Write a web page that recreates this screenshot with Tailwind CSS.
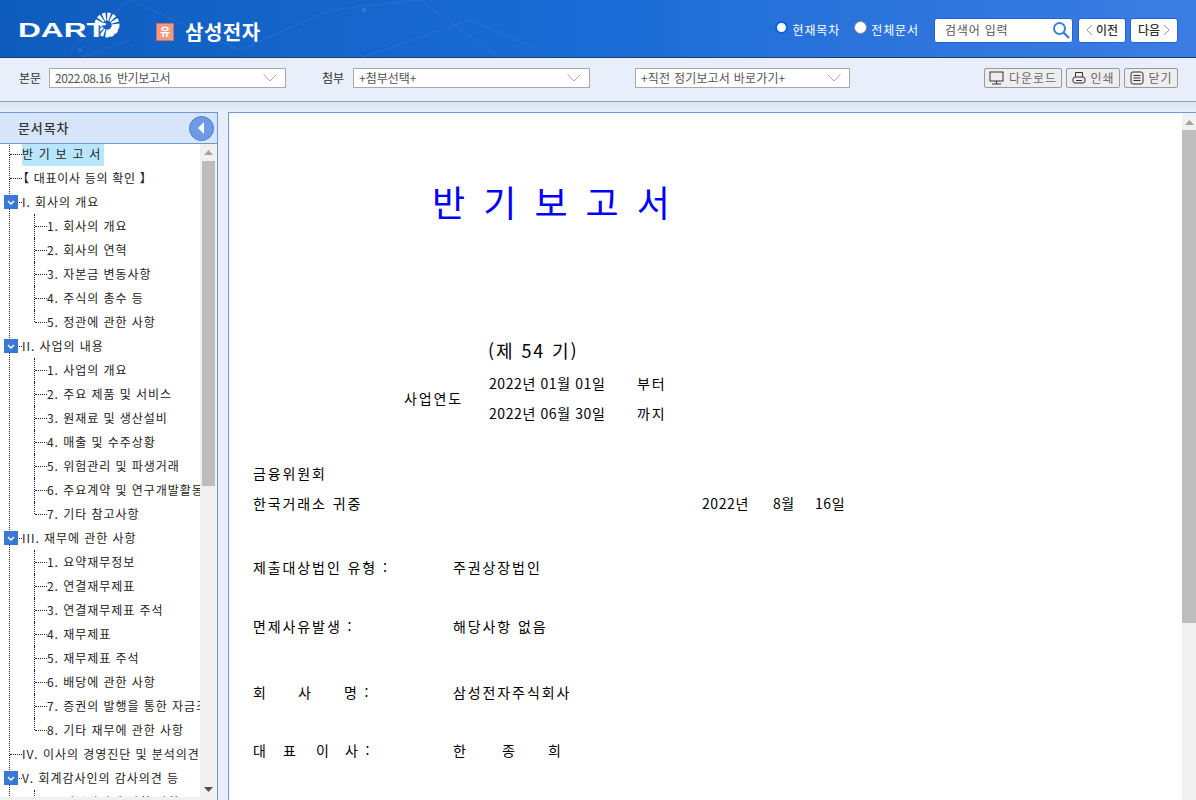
<!DOCTYPE html>
<html lang="ko">
<head>
    <meta charset="UTF-8">
    <script src="https://cdn.jsdelivr.net/npm/@tailwindcss/browser@4"></script>
    <title>DART - 삼성전자</title>
</head>
<body class="h-[800px] overflow-hidden bg-[#e8effb] font-['Noto_Sans_CJK_KR','Liberation_Sans',sans-serif] text-[12px] text-[#333]">
    <!-- top bar -->
    <header class="relative h-[58px] flex items-center overflow-hidden border-b border-[#1a3f78] bg-gradient-to-r from-[#0e5cbd] via-[#1a6cd6] to-[#3b7de3]">
        <svg class="absolute inset-0 opacity-20" width="1196" height="58" fill="none" stroke="#9cc8ff" stroke-width="0.6">
            <path d="M70 50 130 0M130 0 240 50M240 50 330 10M330 10 420 0M420 0 500 58M130 40 80 58M360 58 470 20M470 20 540 50"/>
            <circle cx="80" cy="50" r="1.5" fill="#9cc8ff"/><circle cx="364" cy="10" r="2" fill="#9cc8ff"/>
        </svg>
        <div class="relative w-[156px] shrink-0 flex items-center pl-[18px] mt-[2px]">
            <svg class="absolute left-[94px] -top-[8px]" width="26" height="26" viewBox="0 0 26 26" fill="none" stroke="#fff">
                <circle cx="13" cy="13" r="8.5" stroke-width="8" stroke-dasharray="2.6 1.4"/>
                <path d="M14 25a12 12 0 0 0 11-11h-7a5 5 0 0 1-4 4z" fill="#fff" stroke="none"/>
            </svg>
            <span class="relative origin-left scale-x-[1.58] font-['Liberation_Sans'] text-[20px] leading-none font-bold text-white [text-shadow:1px_0_0_#1565c8]">DART</span>
        </div>
        <span class="relative mt-[6px] w-[18px] h-[18px] flex items-center justify-center bg-[#ee9a84] border border-[#c4735c] text-[11px] font-bold text-white">유</span>
        <h1 class="relative mt-[6px] ml-[11px] text-[20px] tracking-[0.5px] font-bold text-white">삼성전자</h1>
        <div class="relative ml-auto mt-[3px] flex items-center pr-[18px]">
            <span class="w-[13px] h-[13px] rounded-full bg-white border-2 border-[#0f62e8] mt-[-6px]"></span>
            <span class="ml-[4px] text-white tracking-[0.9px]">현재목차</span>
            <span class="ml-[14px] w-[13px] h-[13px] rounded-full bg-white border border-[#8a8a8a] mt-[-6px]"></span>
            <span class="ml-[4px] text-white tracking-[0.9px]">전체문서</span>
            <div class="ml-[15px] w-[139px] h-[25px] flex items-center justify-between rounded-[3px] bg-white border border-[#2560d8] pl-[10px] pr-[2px]">
                <span class="text-[#555] tracking-[0.8px]">검색어 입력</span>
                <svg width="18" height="18" viewBox="0 0 18 18" fill="none" stroke="#3a84dc" stroke-width="2"><circle cx="7.5" cy="7.5" r="5.5"/><path d="M11.5 11.500 17 17" stroke-width="2.4"/></svg>
            </div>
            <button class="ml-[5px] w-[48px] h-[25px] flex items-center justify-center gap-[3px] rounded-[3px] bg-white border border-[#2560d8] font-medium">
                <svg width="7" height="12" viewBox="0 0 7 12" fill="none" stroke="#999"><path d="M6 1 1 6l5 5"/></svg>이전
            </button>
            <button class="ml-[4px] w-[48px] h-[25px] flex items-center justify-center gap-[3px] rounded-[3px] bg-white border border-[#2560d8] font-medium">
                다음<svg width="7" height="12" viewBox="0 0 7 12" fill="none" stroke="#999"><path d="m1 1 5 5-5 5"/></svg>
            </button>
        </div>
    </header>

    <!-- select bar -->
    <div class="h-[44px] flex items-center border-b border-[#7c9dd0] bg-[#e8effb] pl-[19px] pb-[3px]">
        <span class="w-[30px]">본문</span>
        <div class="w-[237px] h-[20px] flex items-center justify-between bg-white border border-[#aaa] pl-[5px] pr-[8px] text-[#555]">
            <span class="whitespace-pre tracking-[-0.4px]">2022.08.16  반기보고서</span>
            <svg width="14" height="8" viewBox="0 0 14 8" fill="none" stroke="#aaa"><path d="m0.5 0.5 6.5 6.5 6.5-6.5"/></svg>
        </div>
        <span class="ml-[36px] w-[31px]">첨부</span>
        <div class="w-[237px] h-[20px] flex items-center justify-between bg-white border border-[#aaa] pl-[5px] pr-[8px] text-[#555]">
            <span>+첨부선택+</span>
            <svg width="14" height="8" viewBox="0 0 14 8" fill="none" stroke="#aaa"><path d="m0.5 0.5 6.5 6.5 6.5-6.5"/></svg>
        </div>
        <div class="ml-[45px] w-[215px] h-[20px] flex items-center justify-between bg-white border border-[#aaa] pl-[5px] pr-[8px] text-[#555]">
            <span class="tracking-[0.2px]">+직전 정기보고서 바로가기+</span>
            <svg width="14" height="8" viewBox="0 0 14 8" fill="none" stroke="#aaa"><path d="m0.5 0.5 6.5 6.5 6.5-6.5"/></svg>
        </div>
        <div class="ml-auto flex gap-[4px] pr-[18px] text-[#666] tracking-[0.9px]">
            <button class="w-[78px] h-[20px] flex items-center justify-center gap-[5px] rounded-[2px] bg-[#eee] border border-[#999]">
                <svg width="15" height="14" viewBox="0 0 15 14" fill="none" stroke="#333"><rect x="1" y="1" width="13" height="9"/><path d="M7.5 10v3M3 13h9"/></svg>다운로드
            </button>
            <button class="w-[54px] h-[20px] flex items-center justify-center gap-[5px] rounded-[2px] bg-[#eee] border border-[#999]">
                <svg width="14" height="14" viewBox="0 0 14 14" fill="none" stroke="#333"><path d="M3.5 6V1.5h7V6"/><rect x="1" y="6" width="12" height="6" rx="2"/><path d="M4 9.500h6"/></svg>인쇄
            </button>
            <button class="w-[54px] h-[20px] flex items-center justify-center gap-[5px] rounded-[2px] bg-[#eee] border border-[#999]">
                <svg width="14" height="14" viewBox="0 0 14 14" fill="none" stroke="#333"><rect x="1" y="1" width="12" height="12" rx="2"/><path d="M3.5 4.500h7M3.500 7h7M3.500 9.500h7"/></svg>닫기
            </button>
        </div>
    </div>

    <div class="flex pt-[10px] bg-gradient-to-b from-[#dfe5ef] to-[#e8effb] to-[10px] h-[698px]">
        <!-- toc panel -->
        <aside class="w-[218px] shrink-0 flex flex-col border-t border-r border-[#6f98d8] bg-white">
            <div class="h-[31px] shrink-0 flex items-center justify-between border-b border-[#6f98d8] bg-[#d6e5fb] pl-[18px] pr-[3px]">
                <span class="text-[13px] font-medium tracking-[0.9px]">문서목차</span>
                <span class="w-[25px] h-[25px] flex items-center justify-center rounded-full bg-[#6e9be3] border border-[#4f7cc6]">
                    <svg width="7" height="12" viewBox="0 0 7 12"><path d="M6 0v12L0 6z" fill="#fff"/></svg>
                </span>
            </div>
            <div class="relative flex grow overflow-hidden">
                <div class="w-[200px] shrink-0 overflow-hidden text-[12px] tracking-[0.95px] whitespace-nowrap text-[#222]">
                    <div class="ml-[9px] border-l border-dotted border-[#222]">
                        <div class="flex h-[24px] items-center -mt-[2px]"><i class="w-[12px] shrink-0 border-t border-dotted border-[#222]"></i><span class="h-[23px] pr-[3px] flex items-center rounded-[2px] bg-[#b8e6ff] tracking-[1.2px]">반 기 보 고 서</span></div>
                        <div class="flex h-[24px] items-center"><i class="w-[12px] shrink-0 border-t border-dotted border-[#222]"></i><span class="-ml-[5px] tracking-[0.7px]">【 대표이사 등의 확인 】</span></div>

                        <div class="relative flex h-[24px] items-center"><b class="absolute -left-[6px] top-[5px] w-[14px] h-[14px] flex items-center justify-center bg-[#3a78d8]"><svg width="8" height="5" viewBox="0 0 8 5" fill="none" stroke="#fff" stroke-width="1.5"><path d="m1 1 3 3 3-3"/></svg></b><i class="w-[12px] shrink-0 border-t border-dotted border-[#222]"></i>I. 회사의 개요</div>
                        <div class="flex h-[24px] items-center pl-[24px]"><i class="h-full shrink-0 border-l border-dotted border-[#222]"></i><i class="w-[12px] shrink-0 border-t border-dotted border-[#222]"></i>1. 회사의 개요</div>
                        <div class="flex h-[24px] items-center pl-[24px]"><i class="h-full shrink-0 border-l border-dotted border-[#222]"></i><i class="w-[12px] shrink-0 border-t border-dotted border-[#222]"></i>2. 회사의 연혁</div>
                        <div class="flex h-[24px] items-center pl-[24px]"><i class="h-full shrink-0 border-l border-dotted border-[#222]"></i><i class="w-[12px] shrink-0 border-t border-dotted border-[#222]"></i>3. 자본금 변동사항</div>
                        <div class="flex h-[24px] items-center pl-[24px]"><i class="h-full shrink-0 border-l border-dotted border-[#222]"></i><i class="w-[12px] shrink-0 border-t border-dotted border-[#222]"></i>4. 주식의 총수 등</div>
                        <div class="flex h-[24px] items-center pl-[24px]"><i class="h-3 self-start shrink-0 border-l border-dotted border-[#222]"></i><i class="w-[12px] shrink-0 border-t border-dotted border-[#222]"></i>5. 정관에 관한 사항</div>

                        <div class="relative flex h-[24px] items-center"><b class="absolute -left-[6px] top-[5px] w-[14px] h-[14px] flex items-center justify-center bg-[#3a78d8]"><svg width="8" height="5" viewBox="0 0 8 5" fill="none" stroke="#fff" stroke-width="1.5"><path d="m1 1 3 3 3-3"/></svg></b><i class="w-[12px] shrink-0 border-t border-dotted border-[#222]"></i>II. 사업의 내용</div>
                        <div class="flex h-[24px] items-center pl-[24px]"><i class="h-full shrink-0 border-l border-dotted border-[#222]"></i><i class="w-[12px] shrink-0 border-t border-dotted border-[#222]"></i>1. 사업의 개요</div>
                        <div class="flex h-[24px] items-center pl-[24px]"><i class="h-full shrink-0 border-l border-dotted border-[#222]"></i><i class="w-[12px] shrink-0 border-t border-dotted border-[#222]"></i>2. 주요 제품 및 서비스</div>
                        <div class="flex h-[24px] items-center pl-[24px]"><i class="h-full shrink-0 border-l border-dotted border-[#222]"></i><i class="w-[12px] shrink-0 border-t border-dotted border-[#222]"></i>3. 원재료 및 생산설비</div>
                        <div class="flex h-[24px] items-center pl-[24px]"><i class="h-full shrink-0 border-l border-dotted border-[#222]"></i><i class="w-[12px] shrink-0 border-t border-dotted border-[#222]"></i>4. 매출 및 수주상황</div>
                        <div class="flex h-[24px] items-center pl-[24px]"><i class="h-full shrink-0 border-l border-dotted border-[#222]"></i><i class="w-[12px] shrink-0 border-t border-dotted border-[#222]"></i>5. 위험관리 및 파생거래</div>
                        <div class="flex h-[24px] items-center pl-[24px]"><i class="h-full shrink-0 border-l border-dotted border-[#222]"></i><i class="w-[12px] shrink-0 border-t border-dotted border-[#222]"></i>6. 주요계약 및 연구개발활동</div>
                        <div class="flex h-[24px] items-center pl-[24px]"><i class="h-3 self-start shrink-0 border-l border-dotted border-[#222]"></i><i class="w-[12px] shrink-0 border-t border-dotted border-[#222]"></i>7. 기타 참고사항</div>

                        <div class="relative flex h-[24px] items-center"><b class="absolute -left-[6px] top-[5px] w-[14px] h-[14px] flex items-center justify-center bg-[#3a78d8]"><svg width="8" height="5" viewBox="0 0 8 5" fill="none" stroke="#fff" stroke-width="1.5"><path d="m1 1 3 3 3-3"/></svg></b><i class="w-[12px] shrink-0 border-t border-dotted border-[#222]"></i>III. 재무에 관한 사항</div>
                        <div class="flex h-[24px] items-center pl-[24px]"><i class="h-full shrink-0 border-l border-dotted border-[#222]"></i><i class="w-[12px] shrink-0 border-t border-dotted border-[#222]"></i>1. 요약재무정보</div>
                        <div class="flex h-[24px] items-center pl-[24px]"><i class="h-full shrink-0 border-l border-dotted border-[#222]"></i><i class="w-[12px] shrink-0 border-t border-dotted border-[#222]"></i>2. 연결재무제표</div>
                        <div class="flex h-[24px] items-center pl-[24px]"><i class="h-full shrink-0 border-l border-dotted border-[#222]"></i><i class="w-[12px] shrink-0 border-t border-dotted border-[#222]"></i>3. 연결재무제표 주석</div>
                        <div class="flex h-[24px] items-center pl-[24px]"><i class="h-full shrink-0 border-l border-dotted border-[#222]"></i><i class="w-[12px] shrink-0 border-t border-dotted border-[#222]"></i>4. 재무제표</div>
                        <div class="flex h-[24px] items-center pl-[24px]"><i class="h-full shrink-0 border-l border-dotted border-[#222]"></i><i class="w-[12px] shrink-0 border-t border-dotted border-[#222]"></i>5. 재무제표 주석</div>
                        <div class="flex h-[24px] items-center pl-[24px]"><i class="h-full shrink-0 border-l border-dotted border-[#222]"></i><i class="w-[12px] shrink-0 border-t border-dotted border-[#222]"></i>6. 배당에 관한 사항</div>
                        <div class="flex h-[24px] items-center pl-[24px]"><i class="h-full shrink-0 border-l border-dotted border-[#222]"></i><i class="w-[12px] shrink-0 border-t border-dotted border-[#222]"></i>7. 증권의 발행을 통한 자금조달</div>
                        <div class="flex h-[24px] items-center pl-[24px]"><i class="h-3 self-start shrink-0 border-l border-dotted border-[#222]"></i><i class="w-[12px] shrink-0 border-t border-dotted border-[#222]"></i>8. 기타 재무에 관한 사항</div>

                        <div class="flex h-[24px] items-center"><i class="w-[12px] shrink-0 border-t border-dotted border-[#222]"></i>IV. 이사의 경영진단 및 분석의견</div>
                        <div class="relative flex h-[24px] items-center"><b class="absolute -left-[6px] top-[5px] w-[14px] h-[14px] flex items-center justify-center bg-[#3a78d8]"><svg width="8" height="5" viewBox="0 0 8 5" fill="none" stroke="#fff" stroke-width="1.5"><path d="m1 1 3 3 3-3"/></svg></b><i class="w-[12px] shrink-0 border-t border-dotted border-[#222]"></i>V. 회계감사인의 감사의견 등</div>
                        <div class="flex h-[24px] items-center pl-[24px]"><i class="h-full shrink-0 border-l border-dotted border-[#222]"></i><i class="w-[12px] shrink-0 border-t border-dotted border-[#222]"></i>1. 외부감사에 관한 사항</div>
                    </div>
                </div>
                <!-- toc scrollbar -->
                <div class="w-[17px] shrink-0 flex flex-col items-center bg-[#f0f0f0] px-[2px]">
                    <svg class="mt-[6px] shrink-0" width="9" height="5" viewBox="0 0 9 5"><path d="M4.5 0 9 5H0z" fill="#a3a3a3"/></svg>
                    <div class="mt-[6px] w-full h-[325px] shrink-0 bg-[#bdbdbd]"></div>
                    <svg class="mt-auto mb-[8px] shrink-0" width="9" height="5" viewBox="0 0 9 5"><path d="M0 0h9L4.500 5z" fill="#505050"/></svg>
                </div>
                <div class="absolute left-0 bottom-0 w-[200px] h-[3px] bg-[#f0f0f0]"></div>
            </div>
        </aside>

        <!-- report -->
        <main class="relative ml-[10px] grow flex border-t border-l border-[#6f98d8] bg-white overflow-hidden text-[14px] leading-none tracking-[1.9px] text-black">
            <div class="grow pl-[24px]">
                <h2 class="mt-[70px] ml-[179px] text-[36px] leading-none font-normal tracking-[4px] text-[#0000ff] whitespace-pre">반 기 보 고 서</h2>
                <p class="mt-[122px] ml-[235px] text-[18px]">(제 54 기)</p>
                <div class="mt-[17px] ml-[151px] flex items-center">
                    <span class="w-[85px]">사업연도</span>
                    <div class="grid grid-cols-[148px_auto] gap-y-[16px]">
                        <span class="tracking-[0.6px]">2022년 01월 01일</span><span>부터</span>
                        <span class="tracking-[0.6px]">2022년 06월 30일</span><span>까지</span>
                    </div>
                </div>
                <p class="mt-[46px]">금융위원회</p>
                <div class="mt-[16px] flex">
                    <span class="w-[449px]">한국거래소 귀중</span>
                    <span class="w-[71px] tracking-[0.6px]">2022년</span><span class="w-[42px] tracking-[0.6px]">8월</span><span class="tracking-[0.6px]">16일</span>
                </div>
                <div class="mt-[50px] flex"><span class="w-[200px]">제출대상법인 유형 :</span><span>주권상장법인</span></div>
                <div class="mt-[45px] flex"><span class="w-[200px]">면제사유발생 :</span><span>해당사항 없음</span></div>
                <div class="mt-[52px] flex">
                    <div class="w-[200px] flex"><span class="w-[45px]">회</span><span class="w-[46px]">사</span><span>명 :</span></div>
                    <span>삼성전자주식회사</span>
                </div>
                <div class="mt-[44px] flex">
                    <div class="w-[200px] flex"><span class="w-[30px]">대</span><span class="w-[33px]">표</span><span class="w-[29px]">이</span><span>사 :</span></div>
                    <div class="flex"><span class="w-[49px]">한</span><span class="w-[46px]">종</span><span>희</span></div>
                </div>
            </div>
            <!-- page scrollbar -->
            <div class="w-[14px] shrink-0 flex flex-col items-center bg-[#f1f1f1]">
                <svg class="mt-[7px] shrink-0" width="9" height="5" viewBox="0 0 9 5"><path d="M4.5 0 9 5H0z" fill="#a3a3a3"/></svg>
                <div class="mt-[5px] w-full h-[493px] bg-[#bdbdbd]"></div>
            </div>
        </main>
    </div>
</body>
</html>
